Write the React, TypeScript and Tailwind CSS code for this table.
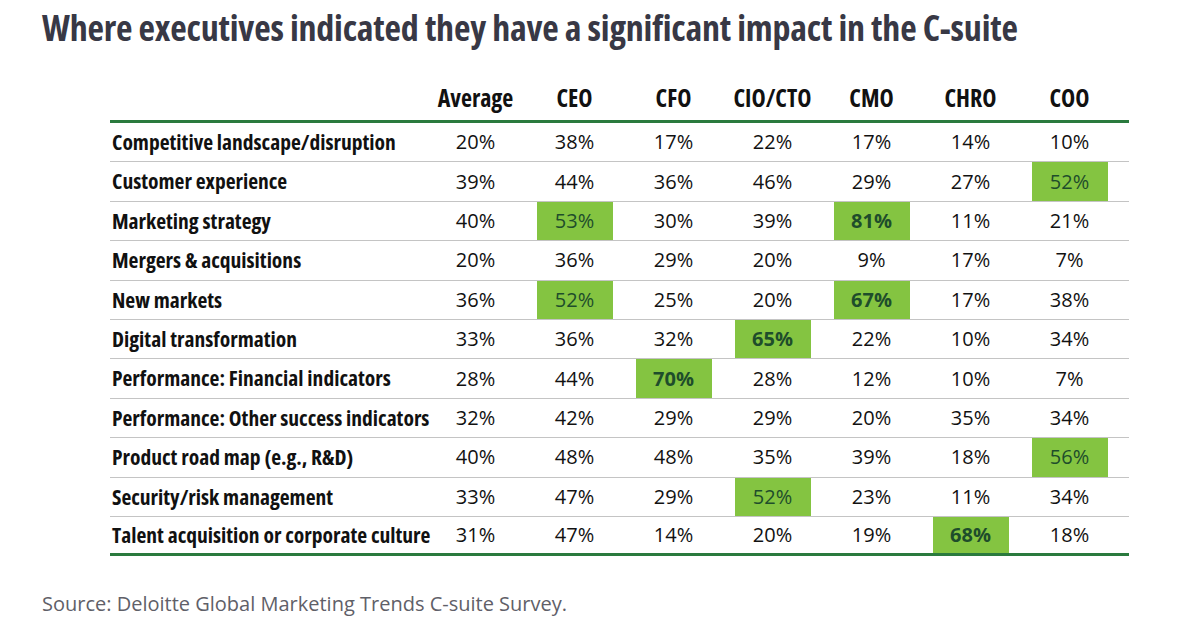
import React from "react";

type Row = { label: string; vals: number[]; hl: Record<number, "b" | "r"> };

const rows: Row[] = [
  { label: "Competitive landscape/disruption", vals: [20, 38, 17, 22, 17, 14, 10], hl: {} },
  { label: "Customer experience", vals: [39, 44, 36, 46, 29, 27, 52], hl: { 6: "r" } },
  { label: "Marketing strategy", vals: [40, 53, 30, 39, 81, 11, 21], hl: { 1: "r", 4: "b" } },
  { label: "Mergers & acquisitions", vals: [20, 36, 29, 20, 9, 17, 7], hl: {} },
  { label: "New markets", vals: [36, 52, 25, 20, 67, 17, 38], hl: { 1: "r", 4: "b" } },
  { label: "Digital transformation", vals: [33, 36, 32, 65, 22, 10, 34], hl: { 3: "b" } },
  { label: "Performance: Financial indicators", vals: [28, 44, 70, 28, 12, 10, 7], hl: { 2: "b" } },
  { label: "Performance: Other success indicators", vals: [32, 42, 29, 29, 20, 35, 34], hl: {} },
  { label: "Product road map (e.g., R&D)", vals: [40, 48, 48, 35, 39, 18, 56], hl: { 6: "r" } },
  { label: "Security/risk management", vals: [33, 47, 29, 52, 23, 11, 34], hl: { 3: "r" } },
  { label: "Talent acquisition or corporate culture", vals: [31, 47, 14, 20, 19, 68, 18], hl: { 5: "b" } },
];

const headers = ["Average", "CEO", "CFO", "CIO/CTO", "CMO", "CHRO", "COO"];

export default function App() {
  return (
    <div className="w-[1186px] h-[638px] bg-white overflow-hidden font-['Open_Sans',sans-serif]">
      <h1 className="ml-[42px] pt-[6px] text-[36px] leading-[44px] font-bold font-stretch-condensed text-[#383845] tracking-[-0.2px]">
        Where executives indicated they have a significant impact in the C-suite
      </h1>
      <div className="ml-[110px] w-[1019px] mt-[26px]">
        <div className="grid grid-cols-[316px_repeat(7,99px)_1fr] h-[47px] items-center border-b-[3px] border-[#2a7a3e]">
          <div />
          {headers.map((h) => (
            <div key={h} className="text-center text-[24px] font-bold font-stretch-condensed text-[#111]">
              {h}
            </div>
          ))}
          <div />
        </div>
        {rows.map((r, i) => (
          <div
            key={r.label}
            className={
              "grid grid-cols-[316px_repeat(7,99px)_1fr] h-[39.4px] " +
              (i === rows.length - 1 ? "border-b-[3px] border-[#2a7a3e]" : "border-b border-[#c4c4c4]")
            }
          >
            <div className="pl-[2px] flex items-center text-[21.5px] font-bold font-stretch-condensed text-[#111] whitespace-nowrap">
              {r.label}
            </div>
            {r.vals.map((v, j) => {
              const h = r.hl[j];
              return (
                <div key={j} className="flex justify-center">
                  {h ? (
                    <div
                      className={
                        "w-[76px] h-full flex items-center justify-center bg-[#84c441] text-[20px] text-[#1e4d2b] " +
                        (h === "b" ? "font-bold" : "")
                      }
                    >
                      {v}%
                    </div>
                  ) : (
                    <div className="flex items-center justify-center text-[20px] text-[#111]">{v}%</div>
                  )}
                </div>
              );
            })}
            <div />
          </div>
        ))}
      </div>
      <p className="ml-[42px] mt-[34px] text-[20px] leading-[28px] text-[#5f6068]">
        Source: Deloitte Global Marketing Trends C-suite Survey.
      </p>
    </div>
  );
}
